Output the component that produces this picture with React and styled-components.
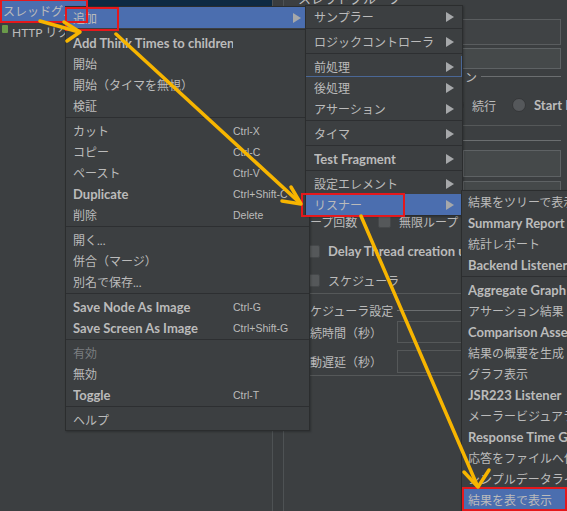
import React from "react";
import styled, { createGlobalStyle } from "styled-components";

const GlobalStyle = createGlobalStyle`
  html, body {
    margin: 0;
    padding: 0;
    background: #3c3f41;
    overflow: hidden;
  }
  * {
    box-sizing: border-box;
  }
`;

const menuMain = [
  { label: "追加", arrow: true, active: true },
  "sep",
  { label: "Add Think Times to children" },
  { label: "開始" },
  { label: "開始（タイマを無視）" },
  { label: "検証" },
  "sep",
  { label: "カット", keys: "Ctrl-X" },
  { label: "コピー", keys: "Ctrl-C" },
  { label: "ペースト", keys: "Ctrl-V" },
  { label: "Duplicate", keys: "Ctrl+Shift-C" },
  { label: "削除", keys: "Delete" },
  "sep",
  { label: "開く..." },
  { label: "併合（マージ）" },
  { label: "別名で保存..." },
  "sep",
  { label: "Save Node As Image", keys: "Ctrl-G" },
  { label: "Save Screen As Image", keys: "Ctrl+Shift-G" },
  "sep",
  { label: "有効", disabled: true },
  { label: "無効" },
  { label: "Toggle", keys: "Ctrl-T" },
  "sep",
  { label: "ヘルプ" },
];

const menuAdd = [
  { label: "サンプラー", arrow: true },
  "sep",
  { label: "ロジックコントローラ", arrow: true },
  "sep",
  { label: "前処理", arrow: true, focus: true },
  { label: "後処理", arrow: true },
  { label: "アサーション", arrow: true },
  "sep",
  { label: "タイマ", arrow: true },
  "sep",
  { label: "Test Fragment", arrow: true },
  "sep",
  { label: "設定エレメント", arrow: true },
  { label: "リスナー", arrow: true, active: true },
];

const menuListener = [
  { label: "結果をツリーで表示" },
  { label: "Summary Report" },
  { label: "統計レポート" },
  { label: "Backend Listener" },
  "sep",
  { label: "Aggregate Graph" },
  { label: "アサーション結果" },
  { label: "Comparison Assertion Visualizer" },
  { label: "結果の概要を生成" },
  { label: "グラフ表示" },
  { label: "JSR223 Listener" },
  { label: "メーラービジュアライザ" },
  { label: "Response Time Graph" },
  { label: "応答をファイルへ保存" },
  { label: "シンプルデータライタ" },
  { label: "結果を表で表示", active: true },
];

const isLatin = (s) => /^[\x20-\x7e]+$/.test(s);

const PopupMenu = ({ items, left, top, width, pad, z, shortcutWidth }) => (
  <Menu $left={left} $top={top} $width={width} $z={z}>
    {items.map((it, i) =>
      it === "sep" ? (
        <Separator key={i} />
      ) : (
        <Item
          key={i}
          $pad={pad}
          $active={it.active}
          $disabled={it.disabled}
          $latin={isLatin(it.label)}
          $focus={it.focus}
        >
          <Label>{it.label}</Label>
          {shortcutWidth && <Shortcut $width={shortcutWidth}>{it.keys}</Shortcut>}
          {it.arrow && <SubArrow />}
        </Item>
      )
    )}
  </Menu>
);

const App = () => (
  <>
    <GlobalStyle />
    <Frame>
      <TreePane>
        <TreeTop>
          <TreeLabel $selected>スレッドグループ</TreeLabel>
        </TreeTop>
        <TreeLabel $child>
          <LeafIcon />
          HTTP リクエスト
        </TreeLabel>
      </TreePane>
      <Splitter />
      <FormPane>
        <PanelTitle>スレッドグループ</PanelTitle>
        <FieldRow $h={26} $mt={13}>
          <FieldLabel $w={40}>名前:</FieldLabel>
          <TextField $tone="dim" />
        </FieldRow>
        <FieldRow $h={21} $mt={3}>
          <FieldLabel $w={60}>コメント:</FieldLabel>
          <TextField $fill />
        </FieldRow>
        <GroupTitle $mt={0}>
          <span>サンプラーエラー後のアクション</span>
          <TitleLine />
        </GroupTitle>
        <RadioRow>
          <RadioDot />
          <OptionText>続行</OptionText>
          <RadioDot />
          <OptionText $latin>Start Next Thread Loop</OptionText>
        </RadioRow>
        <GroupEnd $mt={9} />

        <GroupTitle $mt={7}>
          <span>スレッドプロパティ</span>
          <TitleLine />
        </GroupTitle>
        <FieldRow $h={27} $mt={3}>
          <FieldLabel $w={165}>スレッド数:</FieldLabel>
          <TextField $fill />
        </FieldRow>
        <FieldRow $h={26} $mt={4}>
          <FieldLabel $w={165}>Ramp-Up 期間（秒）:</FieldLabel>
          <TextField $fill />
        </FieldRow>
        <FieldRow $h={22} $mt={3}>
          <FieldLabel $w={80}>ループ回数</FieldLabel>
          <CheckBox />
          <OptionText>無限ループ</OptionText>
          <TextField />
        </FieldRow>
        <CheckRow $mt={8}>
          <CheckBox />
          <OptionText $latin>Delay Thread creation until needed</OptionText>
        </CheckRow>
        <CheckRow $mt={7}>
          <CheckBox />
          <OptionText>スケジューラ</OptionText>
        </CheckRow>
        <GroupEnd $mt={2} />

        <GroupTitle $mt={9}>
          <span>スケジューラ設定</span>
          <TitleLine />
        </GroupTitle>
        <FieldRow $h={22} $mt={4}>
          <FieldLabel $w={99}>持続時間（秒）</FieldLabel>
          <TextField $fill $tone="flat" />
        </FieldRow>
        <FieldRow $h={23} $mt={7}>
          <FieldLabel $w={99}>起動遅延（秒）</FieldLabel>
          <TextField $fill $tone="flat" />
        </FieldRow>
        <GroupEnd $mt={2} $wide />
      </FormPane>

      <PopupMenu items={menuMain} left={65} top={6} width={245} pad={7} z={1} shortcutWidth={76} />
      <PopupMenu items={menuAdd} left={305} top={5} width={158} pad={8} z={2} />
      <PopupMenu items={menuListener} left={461} top={190} width={150} pad={6} z={3} />

      <Annotations viewBox="0 0 567 511" width="567" height="511">
        <g fill="none" stroke="#e5181c" strokeWidth="2">
          <rect x="1" y="0" width="86" height="22" />
          <rect x="66" y="8" width="52" height="22" />
          <rect x="302" y="194" width="102" height="22" />
          <rect x="463" y="488" width="103" height="22" />
        </g>
        <g fill="none" stroke="#f7b500" strokeWidth="3.5" strokeLinecap="round" strokeLinejoin="round">
          <line x1="40" y1="21" x2="79" y2="32" />
          <polyline points="64,22 80,32 67,41" />
          <line x1="116" y1="34" x2="300" y2="203" />
          <polyline points="291,187 301,204 282,201" />
          <line x1="361" y1="216" x2="477" y2="485" />
          <polyline points="464,472 478,487 489,470" />
        </g>
      </Annotations>
    </Frame>
  </>
);

const Frame = styled.div`
  position: relative;
  width: 567px;
  height: 511px;
  display: flex;
  background: #3c3f41;
  overflow: hidden;
  font-family: "Lato", "Noto Sans CJK JP", sans-serif;
  color: #bbbbbb;
`;

const TreePane = styled.div`
  width: 272px;
  flex: none;
  display: flex;
  flex-direction: column;
`;

const TreeTop = styled.div`
  height: 21px;
  display: flex;
  background: #0e2a42;
`;

const TreeLabel = styled.div`
  height: 21px;
  display: flex;
  align-items: center;
  gap: 4px;
  width: ${(p) => (p.$selected ? "87px" : "auto")};
  padding-left: ${(p) => (p.$child ? 2 : 3)}px;
  background: ${(p) => (p.$selected ? "#4b6eaf" : "transparent")};
  font-size: 12px;
  white-space: nowrap;
  overflow: hidden;
`;

const LeafIcon = styled.span`
  width: 6px;
  height: 8px;
  margin-top: -6px;
  border-radius: 1px;
  background: #6a9a4a;
`;

const Splitter = styled.div`
  width: 12px;
  flex: none;
  border-left: 1px solid #4e5254;
  border-right: 1px solid #4e5254;
  background: #3a3d3f;
`;

const FormPane = styled.div`
  flex: 1;
  min-width: 0;
  overflow: hidden;
  display: flex;
  flex-direction: column;
  padding: 0 6px 0 14px;
  font-size: 12px;
`;

const PanelTitle = styled.div`
  margin-top: -9px;
  height: 15px;
  font-size: 13px;
  line-height: 15px;
  color: #c0c0c0;
  white-space: nowrap;
`;

const FieldRow = styled.div`
  height: ${(p) => p.$h}px;
  margin-top: ${(p) => p.$mt}px;
  display: flex;
  align-items: center;
  flex: none;
`;

const FieldLabel = styled.span`
  width: ${(p) => p.$w}px;
  flex: none;
  white-space: nowrap;
`;

const fieldTones = {
  dim: { bg: "#404345", border: "#5a5d5f" },
  flat: { bg: "#3d4042", border: "#555859" },
  normal: { bg: "#45494a", border: "#5e6264" },
};

const TextField = styled.div`
  flex: 1;
  min-width: 20px;
  align-self: stretch;
  margin-left: ${(p) => (p.$fill ? 0 : 8)}px;
  background: ${(p) => fieldTones[p.$tone || "normal"].bg};
  border: 1px solid ${(p) => fieldTones[p.$tone || "normal"].border};
`;

const GroupTitle = styled.div`
  margin-top: ${(p) => p.$mt}px;
  height: 14px;
  flex: none;
  display: flex;
  align-items: center;
  gap: 4px;
  white-space: nowrap;
`;

const TitleLine = styled.div`
  flex: 1;
  height: 1px;
  background: #6b6e70;
  margin-top: 1px;
`;

const GroupEnd = styled.div`
  margin-top: ${(p) => p.$mt}px;
  margin-left: ${(p) => (p.$wide ? -14 : 0)}px;
  height: 1px;
  flex: none;
  background: #555859;
`;

const RadioRow = styled.div`
  height: 22px;
  margin-top: 11px;
  padding-left: 152px;
  flex: none;
  display: flex;
  align-items: center;
  gap: 8px;
  white-space: nowrap;
`;

const RadioDot = styled.span`
  width: 14px;
  height: 14px;
  flex: none;
  border-radius: 50%;
  background: #55585b;
  border: 1px solid #353739;
`;

const OptionText = styled.span`
  font-weight: ${(p) => (p.$latin ? 700 : 400)};
  font-size: ${(p) => (p.$latin ? 13 : 12)}px;
  white-space: nowrap;
  margin-right: 8px;
`;

const CheckRow = styled.div`
  height: 22px;
  margin-top: ${(p) => p.$mt}px;
  padding-left: 9px;
  flex: none;
  display: flex;
  align-items: center;
`;

const CheckBox = styled.span`
  width: 13px;
  height: 13px;
  flex: none;
  margin-right: 8px;
  border-radius: 2px;
  background: #55585a;
  border: 1px solid #45484a;
`;

const Menu = styled.div`
  position: absolute;
  left: ${(p) => p.$left}px;
  top: ${(p) => p.$top}px;
  width: ${(p) => p.$width}px;
  z-index: ${(p) => p.$z};
  display: flex;
  flex-direction: column;
  background: #3c3f41;
  border: 1px solid #2b2d2e;
  box-shadow: 1px 1px 2px rgba(0, 0, 0, 0.25);
`;

const Separator = styled.div`
  height: 1px;
  margin: 1px 0 2px;
  background: #2d2f31;
`;

const Item = styled.div`
  height: 21px;
  display: flex;
  align-items: center;
  padding-left: ${(p) => p.$pad}px;
  background: ${(p) => (p.$active ? "#4b6eaf" : "transparent")};
  color: ${(p) => (p.$disabled ? "#7b7e80" : "#bbbbbb")};
  font-size: ${(p) => (p.$latin ? 13 : 12)}px;
  font-weight: ${(p) => (p.$latin ? 700 : 400)};
  white-space: nowrap;
  box-shadow: ${(p) => (p.$focus ? "inset -1px -1px 0 #4a6796" : "none")};
`;

const Label = styled.span`
  flex: 1;
  overflow: hidden;
`;

const Shortcut = styled.span`
  width: ${(p) => p.$width}px;
  font-family: "Liberation Sans", Arial, sans-serif;
  font-size: 10.5px;
  font-weight: 400;
`;

const SubArrow = styled.span`
  width: 0;
  height: 0;
  margin-right: 8px;
  border-top: 5px solid transparent;
  border-bottom: 5px solid transparent;
  border-left: 8px solid #a6a8aa;
`;

const Annotations = styled.svg`
  position: absolute;
  left: 0;
  top: 0;
  z-index: 10;
  pointer-events: none;
`;

export default App;
